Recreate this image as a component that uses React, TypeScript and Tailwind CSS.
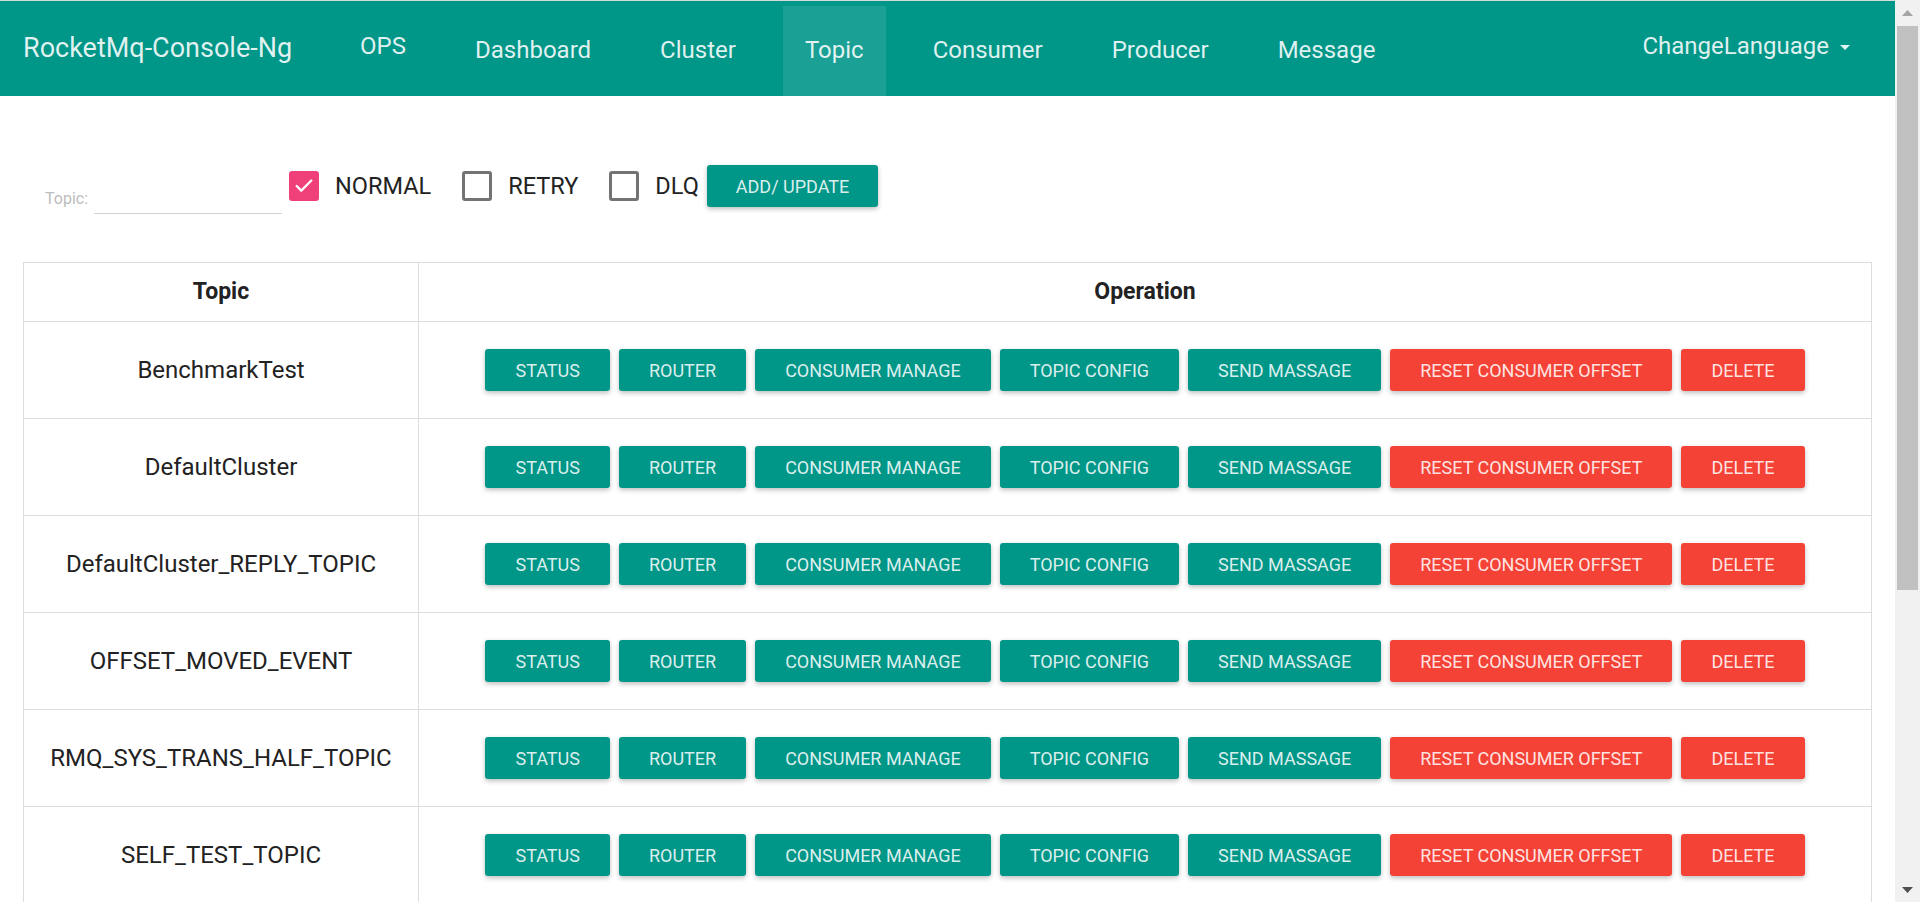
import { Check } from 'lucide-react';

const topics = [
  'BenchmarkTest',
  'DefaultCluster',
  'DefaultCluster_REPLY_TOPIC',
  'OFFSET_MOVED_EVENT',
  'RMQ_SYS_TRANS_HALF_TOPIC',
  'SELF_TEST_TOPIC',
  'TBW102',
  'TopicTest',
  'broker-a',
  'order_topic',
];

const navItems = ['Dashboard', 'Cluster', 'Topic', 'Consumer', 'Producer', 'Message'];

const ops = [
  { label: 'STATUS', red: false },
  { label: 'ROUTER', red: false },
  { label: 'CONSUMER MANAGE', red: false },
  { label: 'TOPIC CONFIG', red: false },
  { label: 'SEND MASSAGE', red: false },
  { label: 'RESET CONSUMER OFFSET', red: true },
  { label: 'DELETE', red: true },
];

function Checkbox({ label, checked }: { label: string; checked?: boolean }) {
  return (
    <label className="flex h-[30px] items-center gap-4 cursor-pointer">
      {checked ? (
        <span className="flex h-[30px] w-[30px] items-center justify-center rounded-[3px] bg-[#ef407a]">
          <Check className="h-[22px] w-[22px] text-white" strokeWidth={2.5} />
        </span>
      ) : (
        <span className="h-[30px] w-[30px] rounded-[3px] border-[3px] border-[#737373]" />
      )}
      <span className="text-[23.5px] leading-[30px] text-[#222]">{label}</span>
    </label>
  );
}

// page scrollbar as seen in the screenshot (headless hides the real one)
function ScrollBar() {
  return (
    <div className="flex h-full w-[25px] shrink-0 flex-col bg-[#f1f1f1]">
      <div className="flex h-[25px] items-center justify-center">
        <svg width="11" height="6" viewBox="0 0 11 6">
          <path d="M0 6 L5.5 0 L11 6 Z" fill="#a3a3a3" />
        </svg>
      </div>
      <div className="mx-[2px] mt-[1px] h-[564px] bg-[#c1c1c1]" />
      <div className="mt-auto flex h-[25px] items-center justify-center">
        <svg width="11" height="6" viewBox="0 0 11 6">
          <path d="M0 0 L11 0 L5.5 6 Z" fill="#505050" />
        </svg>
      </div>
    </div>
  );
}

export default function App() {
  return (
    <div className="flex h-screen overflow-hidden bg-white font-['Roboto',sans-serif]">
      <main className="h-full min-w-0 flex-1 overflow-hidden">
        <nav className="flex h-[96px] border-t border-[#d9d9d9] bg-[#009688] text-[rgba(255,255,255,0.88)]">
          <div className="flex items-center pl-[23px] text-[27px]">RocketMq-Console-Ng</div>
          <div className="ml-[68px] flex items-center pb-[5px] text-[24px]">OPS</div>
          <ul className="ml-[47px] flex gap-[25px] self-end">
            {navItems.map((item) => (
              <li
                key={item}
                className={`flex h-[90px] items-center px-[22px] pb-[2px] text-[24px] ${
                  item === 'Topic' ? 'bg-[rgba(255,255,255,0.1)]' : ''
                }`}
              >
                {item}
              </li>
            ))}
          </ul>
          <div className="ml-auto flex items-center gap-[11px] pr-[45px] pb-[5px] text-[24px]">
            <span>ChangeLanguage</span>
            <svg width="10" height="5" viewBox="0 0 10 5" className="mt-[2px]">
              <path d="M0 0 L10 0 L5 5 Z" fill="currentColor" />
            </svg>
          </div>
        </nav>

        <div className="px-[23px] pt-[69px] pb-[72px]">
          <div className="flex items-start">
            <div className="ml-[22px] mt-[19px] flex h-[30px] items-end">
              <span className="mb-[3px] text-[16px] text-[#bdbdbd]">Topic:</span>
              <input
                className="ml-[6px] h-[30px] w-[188px] border-b border-[#d2d2d2] text-[18px] outline-none"
                type="text"
              />
            </div>
            <div className="ml-[7px] mt-[6px] flex items-center gap-[31px]">
              <Checkbox label="NORMAL" checked />
              <Checkbox label="RETRY" />
              <Checkbox label="DLQ" />
            </div>
            <button className="ml-[8px] h-[42px] rounded-[3px] bg-[#009688] px-[29px] text-[18px] text-[rgba(255,255,255,0.87)] shadow-[0_2px_5px_0_rgba(0,0,0,0.26)]">
              ADD/ UPDATE
            </button>
          </div>

          <table className="mt-[48px] w-full table-fixed border-collapse border border-[#dddddd] text-[#222]">
            <thead>
              <tr className="h-[59px]">
                <th className="w-[395px] border border-[#dddddd] text-[23px] font-bold">Topic</th>
                <th className="border border-[#dddddd] text-[23px] font-bold">Operation</th>
              </tr>
            </thead>
            <tbody>
              {topics.map((t) => (
                <tr key={t} className="h-[97px]">
                  <td className="border border-[#dddddd] text-center text-[24px]">{t}</td>
                  <td className="border border-[#dddddd]">
                    <div className="flex justify-center gap-[9px]">
                      {ops.map((o) => (
                        <button
                          key={o.label}
                          className={`h-[42px] rounded-[3px] px-[30px] text-[18px] text-[rgba(255,255,255,0.87)] shadow-[0_2px_5px_0_rgba(0,0,0,0.26)] ${
                            o.red ? 'bg-[#f44336]' : 'bg-[#009688]'
                          }`}
                        >
                          {o.label}
                        </button>
                      ))}
                    </div>
                  </td>
                </tr>
              ))}
            </tbody>
          </table>
        </div>
      </main>
      <ScrollBar />
    </div>
  );
}
